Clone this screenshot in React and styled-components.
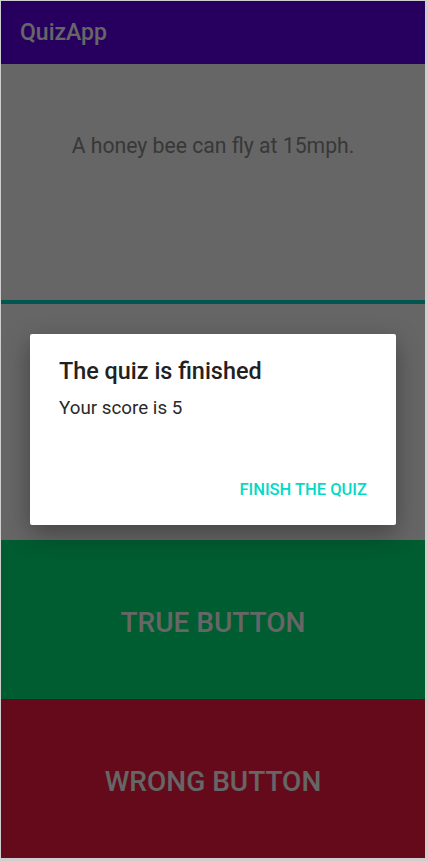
import React from "react";
import styled, { createGlobalStyle } from "styled-components";

const GlobalStyle = createGlobalStyle`
  html, body {
    margin: 0;
    padding: 0;
    background: #cfcfcf;
    font-family: Roboto, "Noto Sans", "Liberation Sans", sans-serif;
  }
`

const Screen = styled.div`
  position: relative;
  margin: 1px 0 0 1px;
  width: 424px;
  height: 857px;
  display: flex;
  flex-direction: column;
  background-color: #ffffff;
  overflow: hidden;
`

const Toolbar = styled.div`
  height: 63px;
  display: flex;
  align-items: center;
  padding-left: 19px;
  background-color: #6200ee;
  color: #ffffff;
  font-size: 23px;
  font-weight: 500;
`

const QuestionBox = styled.div`
  height: 236px;
  display: flex;
  justify-content: center;
  padding-top: 69px;
  box-sizing: border-box;
  color: #8c8c8c;
  font-size: 21.2px;
`

const Divider = styled.div`
  height: 4px;
  background-color: #03dac5;
`

const Spacer = styled.div`
  flex: 1;
`

const AnswerButton = styled.button`
  height: 159px;
  border: none;
  margin: 0;
  padding: 5px 0 0 0;
  background-color: ${(p) => p.$bg};
  color: #ffffff;
  font-family: inherit;
  font-size: 28px;
  font-weight: 500;
  text-transform: uppercase;
  cursor: pointer;
`

const Scrim = styled.div`
  position: absolute;
  inset: 0;
  background-color: rgba(0, 0, 0, 0.6);
  display: flex;
  align-items: center;
  justify-content: center;
`

const Dialog = styled.div`
  width: 366px;
  height: 191px;
  box-sizing: border-box;
  padding: 22px 29px 0 29px;
  background-color: #ffffff;
  border-radius: 2px;
  box-shadow: 0 8px 24px rgba(0, 0, 0, 0.35);
  display: flex;
  flex-direction: column;
`

const DialogTitle = styled.div`
  font-size: 23.4px;
  font-weight: 500;
  color: #212121;
  line-height: 30px;
`

const DialogText = styled.div`
  margin-top: 10px;
  font-size: 18.8px;
  color: #2a2a2a;
  line-height: 24px;
`

const DialogActions = styled.div`
  margin-top: auto;
  margin-bottom: 26px;
  display: flex;
  justify-content: flex-end;
`

const TextButton = styled.button`
  border: none;
  background: none;
  padding: 0;
  font-family: inherit;
  font-size: 16.5px;
  font-weight: 500;
  color: #03dac5;
  text-transform: uppercase;
  cursor: pointer;
`

const App = () => {
  return (
    <>
      <GlobalStyle />
      <Screen>
        <Toolbar>QuizApp</Toolbar>
        <QuestionBox>A honey bee can fly at 15mph.</QuestionBox>
        <Divider />
        <Spacer />
        <AnswerButton $bg="#00e67a">True button</AnswerButton>
        <AnswerButton $bg="#fc1944">Wrong button</AnswerButton>
        <Scrim>
          <Dialog>
            <DialogTitle>The quiz is finished</DialogTitle>
            <DialogText>Your score is 5</DialogText>
            <DialogActions>
              <TextButton>Finish the quiz</TextButton>
            </DialogActions>
          </Dialog>
        </Scrim>
      </Screen>
    </>
  );
};

export default App;
